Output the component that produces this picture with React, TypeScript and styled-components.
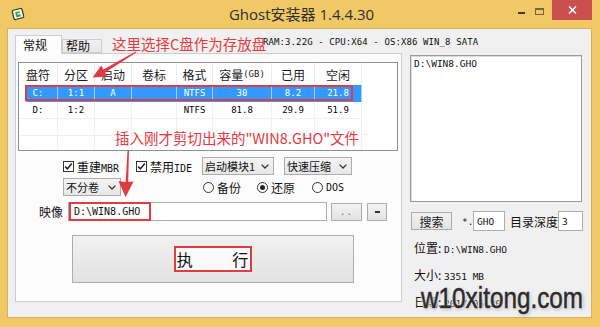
import React from "react";
import styled, { createGlobalStyle } from "styled-components";

const CJK = `"Noto Sans CJK SC", "Microsoft YaHei", sans-serif`;
const MONO = `"DejaVu Sans Mono", "Liberation Mono", "Noto Sans CJK SC", monospace`;
const UI = `"Open Sans", "Noto Sans", "Noto Sans CJK SC", sans-serif`;
const RED = "#e23b42";

const Global = createGlobalStyle`
  html, body { margin: 0; padding: 0; background: #f1c866; }
  body { width: 600px; height: 327px; overflow: hidden; font-family: ${CJK}; }
  * { box-sizing: border-box; }
`;

const Window = styled.div`
  position: relative;
  width: 600px;
  height: 327px;
  background: #f1c866;
  display: flex;
  flex-direction: column;
  overflow: hidden;
`;

const TitleBar = styled.div`
  height: 28px;
  display: grid;
  grid-template-columns: 1fr auto 1fr;
  align-items: center;
  padding: 0 8px 0 11px;
`;

const AppIcon = styled.svg`
  width: 14px;
  height: 14px;
  justify-self: start;
`;

const Title = styled.div`
  font-family: ${UI};
  font-size: 15px;
  color: #2e2e2e;
  line-height: 28px;
  white-space: nowrap;
`;

const Controls = styled.div`
  justify-self: end;
  align-self: start;
  display: flex;
  align-items: flex-start;
`;

const MinGlyph = styled.span`
  width: 7px;
  height: 2px;
  background: #3a3a3a;
  margin: 12px 10px 0 0;
`;

const MaxGlyph = styled.span`
  width: 9px;
  height: 7px;
  border: 1px solid #7a6434;
  border-top-width: 2px;
  margin: 8px 8px 0 0;
`;

const CloseBtn = styled.div`
  width: 40px;
  height: 20px;
  background: #c9504f;
  display: flex;
  align-items: center;
  justify-content: center;
`;

const Client = styled.div`
  position: relative;
  flex: 1;
  margin: 0 8px 9px 7px;
  border: 1px solid #d7b05a;
  background: #f0f0f0;
  padding: 6px 8px 0 7px;
  display: flex;
  flex-direction: column;
`;

const TabStrip = styled.div`
  height: 18px;
  display: flex;
  align-items: flex-end;
`;

const Tab = styled.div<{ $active?: boolean }>`
  position: relative;
  z-index: 1;
  width: ${(p) => (p.$active ? 47 : 40)}px;
  height: ${(p) => (p.$active ? 19 : 14)}px;
  margin-bottom: ${(p) => (p.$active ? -1 : 0)}px;
  padding-left: ${(p) => (p.$active ? 7 : 3)}px;
  border: 1px solid #cdcdcd;
  border-bottom: ${(p) => (p.$active ? "none" : "1px solid #cdcdcd")};
  background: ${(p) => (p.$active ? "#fcfcfc" : "linear-gradient(#f2f2f2, #e6e6e6)")};
  font-size: 12px;
  line-height: ${(p) => (p.$active ? 17 : 12)}px;
  color: #111;
`;

const SysInfo = styled.div`
  align-self: flex-start;
  margin: 1px 0 0 161px;
  font-family: ${MONO};
  font-size: 9px;
  letter-spacing: 0.1px;
  line-height: 12px;
  white-space: nowrap;
  color: #111;
`;

const Body = styled.div`
  display: flex;
  align-items: flex-start;
  gap: 8px;
`;

const TabPanel = styled.div`
  width: 387px;
  height: 249px;
  border: 1px solid #cdcdcd;
  background: #fcfcfc;
  padding: 8px 3px 0 2px;
  display: flex;
  flex-direction: column;
`;

const ListView = styled.div`
  position: relative;
  height: 89px;
  border: 1px solid #8c9098;
  background: #fff;
  overflow: hidden;
`;

const HeaderRow = styled.div`
  display: flex;
  height: 22px;
`;

const HeadCell = styled.div<{ $w: number }>`
  width: ${(p) => p.$w}px;
  flex: none;
  display: flex;
  align-items: center;
  justify-content: center;
  border-right: 1px solid #ececec;
  font-size: 12px;
  color: #1a1a1a;
  white-space: nowrap;
`;

const DataRow = styled.div<{ $selected?: boolean }>`
  display: flex;
  height: 17px;
  width: 343px;
  background: ${(p) =>
    p.$selected ? "linear-gradient(to right, transparent 7px, #3399ff 7px)" : "transparent"};
`;

const Cell = styled.div<{ $w: number; $selected?: boolean }>`
  width: ${(p) => p.$w}px;
  flex: none;
  display: flex;
  align-items: center;
  justify-content: center;
  border-right: 1px solid ${(p) => (p.$selected ? "rgba(255,255,255,0.55)" : "#f0f0f0")};
  border-bottom: 1px solid ${(p) => (p.$selected ? "transparent" : "#f0f0f0")};
  font-family: ${MONO};
  font-size: 9px;
  color: ${(p) => (p.$selected ? "#fff" : "#000")};
`;

const RowMark = styled.div`
  position: absolute;
  left: 6px;
  top: 22px;
  width: 328px;
  height: 16px;
  border: 2px solid ${RED};
`;

const Mono = styled.span<{ $size?: number }>`
  font-family: ${MONO};
  font-size: ${(p) => p.$size ?? 9.5}px;
`;

const OptionRow = styled.div<{ $top: number; $left: number }>`
  display: flex;
  align-items: center;
  height: 18px;
  margin-top: ${(p) => p.$top}px;
  padding-left: ${(p) => p.$left}px;
`;

const CheckItem = styled.label<{ $w: number }>`
  width: ${(p) => p.$w}px;
  flex: none;
  display: flex;
  align-items: center;
  gap: 3px;
  font-size: 12px;
  color: #111;
  white-space: nowrap;
`;

const CheckBox = styled.span`
  width: 11px;
  height: 11px;
  border: 1px solid #333;
  background: #fff;
  display: flex;
  align-items: center;
  justify-content: center;
`;

const Select = styled.div<{ $w: number; $gap?: number }>`
  width: ${(p) => p.$w}px;
  flex: none;
  height: 18px;
  margin-left: ${(p) => p.$gap ?? 0}px;
  border: 1px solid #acacac;
  background: linear-gradient(#f4f4f4, #e7e7e7);
  display: flex;
  align-items: center;
  justify-content: space-between;
  padding: 0 4px 0 2px;
  font-size: 11px;
  color: #111;
  white-space: nowrap;
`;

const RadioItem = styled.label<{ $w?: number; $gap?: number }>`
  width: ${(p) => (p.$w ? `${p.$w}px` : "auto")};
  flex: none;
  margin-left: ${(p) => p.$gap ?? 0}px;
  display: flex;
  align-items: center;
  gap: 3px;
  font-size: 12px;
  color: #111;
`;

const RadioDot = styled.span<{ $on?: boolean }>`
  width: 11px;
  height: 11px;
  border: 1px solid #333;
  border-radius: 50%;
  background: #fff;
  display: flex;
  align-items: center;
  justify-content: center;
  &::after {
    content: "";
    width: 5px;
    height: 5px;
    border-radius: 50%;
    background: ${(p) => (p.$on ? "#222" : "transparent")};
  }
`;

const ImageRow = styled.div`
  display: flex;
  align-items: center;
  height: 19px;
  margin-top: 6px;
  padding-left: 21px;
`;

const FieldLabel = styled.span<{ $w?: number; $gap?: number }>`
  width: ${(p) => (p.$w ? `${p.$w}px` : "auto")};
  margin-left: ${(p) => p.$gap ?? 0}px;
  flex: none;
  font-size: 12px;
  color: #111;
  white-space: nowrap;
`;

const TextBox = styled.div<{ $w: number; $h?: number }>`
  width: ${(p) => p.$w}px;
  height: ${(p) => p.$h ?? 20}px;
  flex: none;
  border: 1px solid #abadb3;
  background: #fff;
  display: flex;
  align-items: stretch;
  font-family: ${MONO};
  font-size: 9.5px;
  color: #111;
`;

const BoxText = styled.span`
  display: flex;
  align-items: center;
  padding-left: 3px;
`;

const PathMark = styled.span`
  width: 82px;
  margin: -1px 0;
  border: 2px solid ${RED};
  display: flex;
  align-items: center;
  padding-left: 3px;
  font-size: 10px;
`;

const SmallButton = styled.div<{ $w: number; $gap: number }>`
  width: ${(p) => p.$w}px;
  height: 18px;
  flex: none;
  margin-left: ${(p) => p.$gap}px;
  border: 1px solid #acacac;
  background: linear-gradient(#f2f2f2, #e3e3e3);
  display: flex;
  align-items: center;
  justify-content: center;
  font-size: 12px;
  color: #222;
`;

const Dots = styled.span`
  font-family: ${MONO};
  font-size: 9px;
  color: #666;
  letter-spacing: 1px;
`;

const Dash = styled.span`
  width: 5px;
  height: 2px;
  background: #333;
`;

const ExecButton = styled.div`
  width: 282px;
  height: 48px;
  margin: 14px 0 0 54px;
  border: 1px solid #acacac;
  background: linear-gradient(#f1f1f1, #e2e2e2);
  display: flex;
  align-items: center;
  justify-content: center;
`;

const ExecLabel = styled.span`
  height: 26px;
  border: 2px solid ${RED};
  background: #f9f9f9;
  padding: 0 2px 0 1px;
  display: flex;
  align-items: center;
  font-size: 16px;
  line-height: 1;
  word-spacing: 36px;
  color: #111;
  white-space: pre;
`;

const Side = styled.div`
  width: 173px;
  margin-top: 2px;
  display: flex;
  flex-direction: column;
`;

const FileList = styled.div`
  width: 172px;
  height: 147px;
  border: 1px solid #9a9a9a;
  box-shadow: inset 1px 1px 0 #dcdcdc;
  background: #fff;
  padding: 2px 0 0 3px;
  font-family: ${MONO};
  font-size: 9.5px;
  line-height: 12px;
  color: #111;
`;

const SearchRow = styled.div`
  display: flex;
  align-items: center;
  height: 20px;
  margin-top: 9px;
`;

const StarText = styled.span`
  width: 11px;
  margin-left: 10px;
  font-family: ${MONO};
  font-size: 9.5px;
  color: #111;
`;

const InfoLine = styled.div<{ $top: number }>`
  margin: ${(p) => p.$top}px 0 0 4px;
  font-size: 12px;
  line-height: 12px;
  color: #111;
  white-space: nowrap;
`;

const Note = styled.div<{ $x: number; $y: number }>`
  position: absolute;
  left: ${(p) => p.$x}px;
  top: ${(p) => p.$y}px;
  font-size: 14.5px;
  line-height: 15px;
  color: ${RED};
  white-space: nowrap;
  pointer-events: none;
`;

const ArrowLayer = styled.svg`
  position: absolute;
  left: 0;
  top: 0;
  width: 600px;
  height: 327px;
  pointer-events: none;
`;

const Watermark = styled.div`
  position: absolute;
  left: 421px;
  top: 281px;
  font-family: "Liberation Sans", Arial, sans-serif;
  font-size: 30px;
  line-height: 34px;
  color: #2c2c2c;
  -webkit-text-stroke: 0.6px #2c2c2c;
  transform: scaleX(0.81);
  transform-origin: 0 0;
  white-space: nowrap;
  text-shadow: 0 0 2px #fff, 0 0 3px #fff, 0 0 4px #fff, 1px 1px 4px rgba(0, 0, 0, 0.45);
  pointer-events: none;
`;

const COLS = [39, 37, 37, 45, 36, 59, 43, 47];
const HEAD: React.ReactNode[] = [
  "盘符",
  "分区",
  "启动",
  "卷标",
  "格式",
  <>
    容量<Mono $size={9}>(GB)</Mono>
  </>,
  "已用",
  "空闲",
];
const ROWS = [
  ["C:", "1:1", "A", "", "NTFS", "30", "8.2", "21.8"],
  ["D:", "1:2", "", "", "NTFS", "81.8", "29.9", "51.9"],
  ["", "", "", "", "", "", "", ""],
  ["", "", "", "", "", "", "", ""],
];

const Chevron = () => (
  <svg width="8" height="5" viewBox="0 0 8 5">
    <path d="M0.6 0.6 L4 4 L7.4 0.6" fill="none" stroke="#333" strokeWidth="1.3" />
  </svg>
);

const Tick = () => (
  <svg width="9" height="9" viewBox="0 0 9 9">
    <path d="M1.2 4.6 L3.4 6.9 L7.8 1.6" fill="none" stroke="#222" strokeWidth="1.6" />
  </svg>
);

export default function App() {
  return (
    <>
      <Global />
      <Window>
        <TitleBar>
          <AppIcon viewBox="0 0 14 14">
            <g transform="rotate(-14 7 7)">
              <rect x="2" y="2.2" width="10" height="9.6" rx="1.4" fill="#f3f5e6" stroke="#2f3a2a" strokeWidth="1.2" />
              <path d="M4.6 4.6 h4.6 v1.6 h-3 v1.4 h3 v2.2 h-4.6z" fill="#3f9e45" />
            </g>
          </AppIcon>
          <Title>Ghost安装器 1.4.4.30</Title>
          <Controls>
            <MinGlyph />
            <MaxGlyph />
            <CloseBtn>
              <svg width="9" height="8" viewBox="0 0 9 8">
                <path d="M1 0.5 L8 7.5 M8 0.5 L1 7.5" stroke="#fff" strokeWidth="1.5" />
              </svg>
            </CloseBtn>
          </Controls>
        </TitleBar>

        <Client>
          <TabStrip>
            <Tab $active>常规</Tab>
            <Tab>帮助</Tab>
            <SysInfo>RAM:3.22G - CPU:X64 - OS:X86 WIN_8 SATA</SysInfo>
          </TabStrip>

          <Body>
            <TabPanel>
              <ListView>
                <HeaderRow>
                  {HEAD.map((h, i) => (
                    <HeadCell key={i} $w={COLS[i]}>
                      {h}
                    </HeadCell>
                  ))}
                </HeaderRow>
                {ROWS.map((r, i) => (
                  <DataRow key={i} $selected={i === 0}>
                    {r.map((c, j) => (
                      <Cell key={j} $w={COLS[j]} $selected={i === 0}>
                        {c}
                      </Cell>
                    ))}
                  </DataRow>
                ))}
                <RowMark />
              </ListView>

              <OptionRow $top={6} $left={45}>
                <CheckItem $w={73}>
                  <CheckBox>
                    <Tick />
                  </CheckBox>
                  <span>
                    重建<Mono $size={10}>MBR</Mono>
                  </span>
                </CheckItem>
                <CheckItem $w={66}>
                  <CheckBox>
                    <Tick />
                  </CheckBox>
                  <span>
                    禁用<Mono $size={10}>IDE</Mono>
                  </span>
                </CheckItem>
                <Select $w={72}>
                  启动模块1
                  <Chevron />
                </Select>
                <Select $w={68} $gap={10}>
                  快速压缩
                  <Chevron />
                </Select>
              </OptionRow>

              <OptionRow $top={3} $left={45}>
                <Select $w={58}>
                  不分卷
                  <Chevron />
                </Select>
                <RadioItem $w={54} $gap={82}>
                  <RadioDot />
                  备份
                </RadioItem>
                <RadioItem $w={55}>
                  <RadioDot $on />
                  还原
                </RadioItem>
                <RadioItem>
                  <RadioDot />
                  <Mono $size={10}>DOS</Mono>
                </RadioItem>
              </OptionRow>

              <ImageRow>
                <FieldLabel $w={29}>映像</FieldLabel>
                <TextBox $w={259} $h={19}>
                  <PathMark>D:\WIN8.GHO</PathMark>
                </TextBox>
                <SmallButton $w={31} $gap={4}>
                  <Dots>..</Dots>
                </SmallButton>
                <SmallButton $w={20} $gap={5}>
                  <Dash />
                </SmallButton>
              </ImageRow>

              <ExecButton>
                <ExecLabel>执 行</ExecLabel>
              </ExecButton>
            </TabPanel>

            <Side>
              <FileList>D:\WIN8.GHO</FileList>
              <SearchRow>
                <SmallButton $w={41} $gap={1}>
                  搜索
                </SmallButton>
                <StarText>*.</StarText>
                <TextBox $w={32}>
                  <BoxText>GHO</BoxText>
                </TextBox>
                <FieldLabel $w={48} $gap={5}>
                  目录深度
                </FieldLabel>
                <TextBox $w={25}>
                  <BoxText>3</BoxText>
                </TextBox>
              </SearchRow>
              <InfoLine $top={11}>
                位置: <Mono>D:\WIN8.GHO</Mono>
              </InfoLine>
              <InfoLine $top={13}>
                大小: <Mono>3351 MB</Mono>
              </InfoLine>
              <InfoLine $top={13}>
                日期: <Mono>2017-05-20</Mono>
              </InfoLine>
            </Side>
          </Body>
        </Client>

        <Note $x={112} $y={36}>这里选择C盘作为存放盘</Note>
        <Note $x={115} $y={130}>插入刚才剪切出来的"WIN8.GHO"文件</Note>

        <ArrowLayer viewBox="0 0 600 327">
          <polygon
            points="136.3,52.6 105.2,72.6 107.6,76.6 92.5,77.5 101.3,65.6 103.4,69.4 135.7,51.6"
            fill={RED}
          />
          <polygon
            points="127.6,150 129.0,150 128.2,182 133.6,181.5 125.6,197 118.4,181 125.6,182"
            fill={RED}
          />
        </ArrowLayer>

        <Watermark>w10xitong.com</Watermark>
      </Window>
    </>
  );
}
